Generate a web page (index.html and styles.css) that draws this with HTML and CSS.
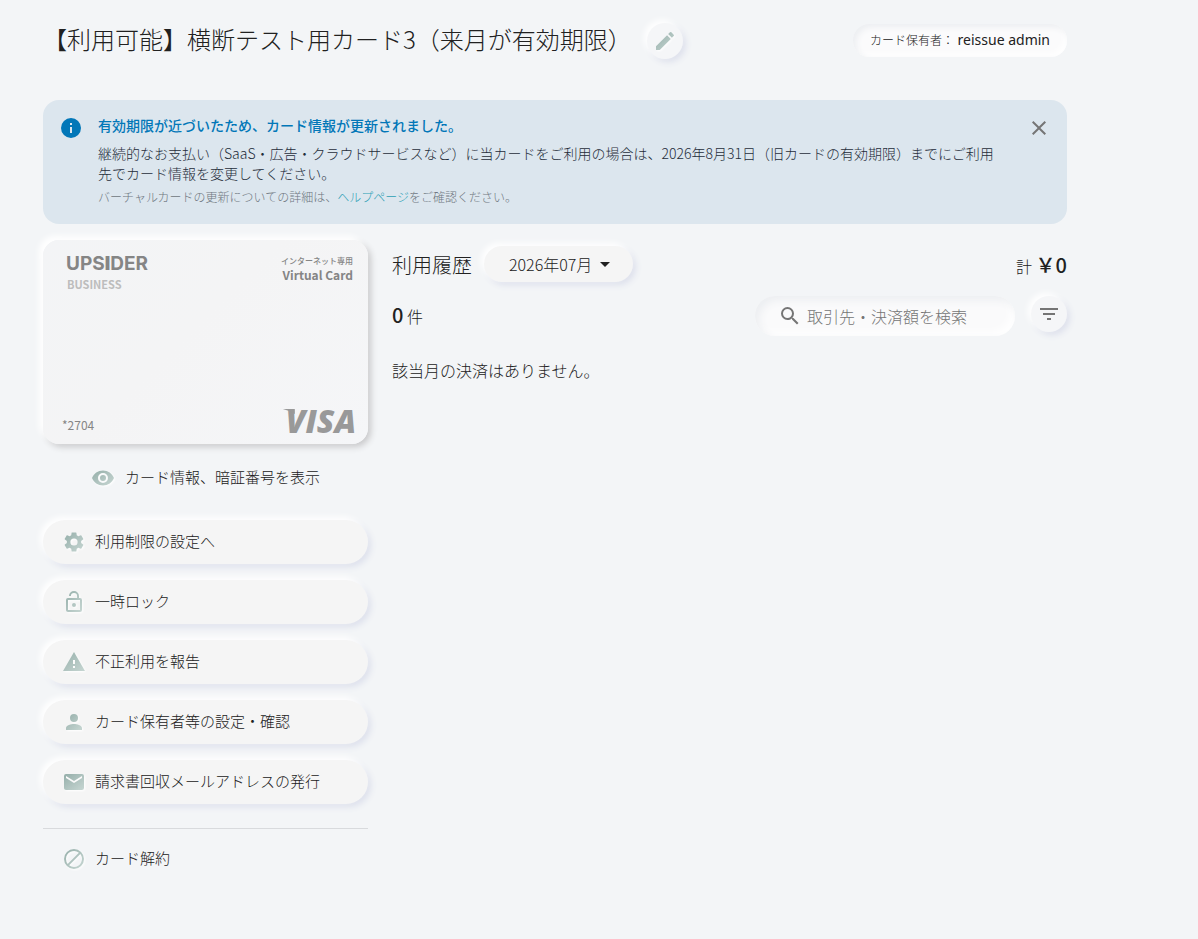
FILE: index.html
```html
<!DOCTYPE html>
<html lang="ja">
<head>
  <meta charset="UTF-8">
  <title>カード詳細</title>
  <meta name="viewport" content="width=device-width, initial-scale=1">
  <link rel="stylesheet" href="styles.css">
</head>
<body>
  <!-- shared gradients for the menu icons -->
  <svg class="defs" width="0" height="0" aria-hidden="true">
    <defs>
      <linearGradient id="sage" x1="0" y1="0" x2="1" y2="1">
        <stop offset="0" stop-color="#94aea9"/>
        <stop offset="0.6" stop-color="#b4c7c3"/>
        <stop offset="1" stop-color="#c6d6d2"/>
      </linearGradient>
    </defs>
  </svg>

  <main class="container">
    <header class="header">
      <h1>【利用可能】横断テスト用カード3（来月が有効期限）</h1>
      <button class="round-btn" aria-label="カード名を編集">
        <svg class="icon sage" viewBox="0 0 24 24"><path d="M3 17.250V21h3.750L17.810 9.940l-3.750-3.750L3 17.250zM20.710 7.040a1 1 0 0 0 0-1.410l-2.340-2.340a1 1 0 0 0-1.410 0l-1.830 1.830 3.750 3.750 1.830-1.830z"/></svg>
      </button>
      <div class="owner"><span>カード保有者：</span> reissue admin</div>
    </header>

    <section class="notice">
      <svg class="icon info" viewBox="0 0 24 24"><path d="M12 2a10 10 0 1 0 0 20 10 10 0 0 0 0-20zm1 15h-2v-6h2v6zm0-8h-2V7h2v2z"/></svg>
      <div class="notice-text">
        <h2>有効期限が近づいたため、カード情報が更新されました。</h2>
        <p>継続的なお支払い（SaaS・広告・クラウドサービスなど）に当カードをご利用の場合は、2026年8月31日（旧カードの有効期限）までにご利用先でカード情報を変更してください。</p>
        <p class="sub">バーチャルカードの更新についての詳細は、<a href="#">ヘルプページ</a>をご確認ください。</p>
      </div>
      <button class="close" aria-label="閉じる">
        <svg class="icon" viewBox="0 0 24 24"><path d="M19 6.410L17.590 5 12 10.590 6.410 5 5 6.410 10.590 12 5 17.590 6.410 19 12 13.410 17.590 19 19 17.590 13.410 12z"/></svg>
      </button>
    </section>

    <div class="columns">
      <aside class="side">
        <div class="card">
          <div class="card-row">
            <div>
              <div class="brand">UPS<span>I</span>DER</div>
              <div class="plan">BUSINESS</div>
            </div>
            <div class="card-type">
              <small>インターネット専用</small>
              <b>Virtual Card</b>
            </div>
          </div>
          <div class="card-row bottom">
            <span class="number">*2704</span>
            <span class="visa">VISA</span>
          </div>
        </div>

        <button class="show">
          <svg class="icon sage" viewBox="0 0 24 24"><path d="M12 4.500C7 4.500 2.730 7.610 1 12c1.730 4.390 6 7.500 11 7.500s9.270-3.110 11-7.500c-1.730-4.390-6-7.500-11-7.500zM12 17a5 5 0 1 1 0-10 5 5 0 0 1 0 10zm0-8a3 3 0 1 0 0 6 3 3 0 0 0 0-6z"/></svg>
          <span>カード情報、暗証番号を表示</span>
        </button>

        <nav class="menu">
          <button>
            <svg class="icon sage" viewBox="0 0 24 24"><path d="M19.140 12.940c.04-.3.06-.61.06-.94 0-.32-.02-.64-.07-.94l2.030-1.580a.49.49 0 0 0 .12-.61l-1.920-3.320a.488.488 0 0 0-.59-.22l-2.390.96c-.5-.38-1.030-.7-1.620-.94l-.36-2.540a.484.484 0 0 0-.48-.41h-3.840c-.24 0-.43.17-.47.41l-.36 2.540c-.59.24-1.130.57-1.620.94l-2.390-.96c-.22-.08-.47 0-.59.22L2.740 8.870c-.12.21-.08.47.12.61l2.030 1.580c-.05.3-.09.63-.09.94s.02.64.07.94l-2.030 1.580a.49.49 0 0 0-.12.61l1.920 3.320c.12.22.37.29.59.22l2.390-.96c.5.38 1.030.7 1.620.94l.36 2.540c.05.24.24.41.48.41h3.840c.24 0 .44-.17.47-.41l.36-2.540c.59-.24 1.130-.56 1.620-.94l2.390.96c.22.08.47 0 .59-.22l1.920-3.320c.12-.22.07-.47-.12-.61l-2.010-1.580zM12 15.600A3.600 3.600 0 1 1 12 8.400a3.600 3.600 0 0 1 0 7.200z"/></svg>
            <span>利用制限の設定へ</span>
          </button>
          <button>
            <svg class="icon sage" viewBox="0 0 24 24"><path d="M12 17a2 2 0 1 0 0-4 2 2 0 0 0 0 4zm6-9h-1V6A5 5 0 0 0 7 6h1.900a3.100 3.100 0 0 1 6.200 0v2H6a2 2 0 0 0-2 2v10c0 1.100.9 2 2 2h12a2 2 0 0 0 2-2V10a2 2 0 0 0-2-2zm0 12H6V10h12v10z"/></svg>
            <span>一時ロック</span>
          </button>
          <button>
            <svg class="icon sage" viewBox="0 0 24 24"><path d="M1 21h22L12 2 1 21zm12-3h-2v-2h2v2zm0-4h-2v-4h2v4z"/></svg>
            <span>不正利用を報告</span>
          </button>
          <button>
            <svg class="icon sage" viewBox="0 0 24 24"><path d="M12 12a4 4 0 1 0 0-8 4 4 0 0 0 0 8zm0 2c-2.670 0-8 1.340-8 4v2h16v-2c0-2.660-5.330-4-8-4z"/></svg>
            <span>カード保有者等の設定・確認</span>
          </button>
          <button>
            <svg class="icon sage" viewBox="0 0 24 24"><path d="M20 4H4a2 2 0 0 0-2 2v12c0 1.100.9 2 2 2h16a2 2 0 0 0 2-2V6a2 2 0 0 0-2-2zm0 4l-8 5-8-5V6l8 5 8-5v2z"/></svg>
            <span>請求書回収メールアドレスの発行</span>
          </button>
        </nav>

        <button class="cancel">
          <svg class="icon sage" viewBox="0 0 24 24"><path d="M12 2a10 10 0 1 0 0 20 10 10 0 0 0 0-20zM4 12a8 8 0 0 1 12.900-6.310L5.690 16.900A7.900 7.900 0 0 1 4 12zm8 8a7.900 7.900 0 0 1-4.900-1.690L18.310 7.100A8 8 0 0 1 12 20z"/></svg>
          <span>カード解約</span>
        </button>
      </aside>

      <section class="history">
        <div class="row">
          <h2>利用履歴</h2>
          <button class="month">2026年07月
            <svg viewBox="0 0 10 5"><path d="M0 0h10L5 5z"/></svg>
          </button>
          <div class="total">計 <b>￥0</b></div>
        </div>
        <div class="row filters">
          <div class="count"><b>0</b> 件</div>
          <label class="search">
            <svg class="icon" viewBox="0 0 24 24"><path d="M15.500 14h-.79l-.28-.27A6.471 6.471 0 0 0 16 9.500 6.500 6.500 0 1 0 9.500 16c1.610 0 3.090-.59 4.230-1.570l.27.28v.79l5 4.990L20.490 19l-4.990-5zm-6 0a4.500 4.500 0 1 1 0-9 4.500 4.500 0 0 1 0 9z"/></svg>
            <input type="text" placeholder="取引先・決済額を検索" aria-label="取引先・決済額を検索">
          </label>
          <button class="round-btn" aria-label="絞り込み">
            <svg class="icon" viewBox="0 0 24 24"><path d="M10 18h4v-2h-4v2zM3 6v2h18V6H3zm3 7h12v-2H6v2z"/></svg>
          </button>
        </div>
        <p class="empty">該当月の決済はありません。</p>
      </section>
    </div>
  </main>
</body>
</html>
```
FILE: styles.css
```css
* {
  box-sizing: border-box;
}

body {
  margin: 0;
  background: #f3f5f7;
  color: #212121;
  font-family: "Noto Sans CJK JP", sans-serif;
  font-size: 14px;
  font-weight: 300;
}

h1, h2, p {
  margin: 0;
  font-weight: 300;
}

button {
  display: flex;
  align-items: center;
  padding: 0;
  border: 0;
  background: none;
  color: inherit;
  font: inherit;
  cursor: pointer;
}

.defs {
  position: absolute;
}

.icon {
  flex: none;
  width: 24px;
  height: 24px;
  fill: #757575;
}

.sage {
  fill: url(#sage);
  filter: drop-shadow(1px 1px 1px #fff);
}

.container {
  padding: 20px 131px 40px 43px;
}

.header {
  display: flex;
  align-items: center;
  height: 40px;
}

h1 {
  padding-bottom: 2px;
  font-size: 24px;
  line-height: 36px;
}

.round-btn {
  justify-content: center;
  flex: none;
  width: 36px;
  height: 36px;
  border-radius: 50%;
  background: #f5f6f8;
  box-shadow: -3px -3px 6px #fff, 3px 3px 6px #dde0ec;
}

.header .round-btn {
  margin: 2px 0 0 15px;
}

.owner {
  margin-left: auto;
  padding: 0 17px;
  border-radius: 16px;
  background: #fbfbfc;
  box-shadow: inset 3px 3px 6px #eceef1, inset -3px -3px 6px #fff;
  font-family: "Noto Sans", "Noto Sans CJK JP", sans-serif;
  font-weight: 400;
  line-height: 32px;
}

.owner span {
  font-size: 12px;
  font-weight: 300;
}

.notice {
  display: flex;
  align-items: flex-start;
  margin-top: 40px;
  padding: 16px;
  border-radius: 16px;
  background: #dce6ee;
  color: #1f2d3a;
}

.info {
  fill: #0277b8;
}

.notice-text {
  flex: 1;
  margin: -1px 20px 1px 15px;
  line-height: 20px;
}

.notice h2 {
  margin-bottom: 8px;
  color: #0277b8;
  font-size: 14px;
  font-weight: 500;
}

.notice .sub {
  margin-top: 4px;
  color: #6f7780;
  font-size: 12px;
}

.notice a {
  color: #2c9fb5;
  text-decoration: none;
}

.columns {
  display: flex;
  gap: 24px;
  margin-top: 16px;
}

.side {
  flex: none;
  width: 325px;
}

.card {
  display: flex;
  flex-direction: column;
  justify-content: space-between;
  height: 204px;
  padding: 14px 12px 7px 19px;
  border-radius: 16px;
  background: linear-gradient(135deg, #f3f4f6, #f4f4f5 45%, #f5f6f8);
  box-shadow: -4px -4px 6px #fff, 3px 3px 6px #c9c9cb;
  color: #858585;
}

.card-row {
  display: flex;
  justify-content: space-between;
}

.card-row.bottom {
  align-items: flex-end;
}

.brand {
  margin-left: 4px;
  font-family: Inter, sans-serif;
  font-size: 19px;
  font-weight: 700;
  line-height: 20px;
}

.brand span {
  font-weight: 900;
}

.plan {
  margin-left: 5px;
  color: #bdbdbd;
  font-size: 11px;
  font-weight: 700;
  line-height: 20px;
}

.card-type {
  display: flex;
  flex-direction: column;
  padding-right: 3px;
  text-align: right;
}

.card-type small {
  font-size: 8px;
  font-weight: 500;
  line-height: 14px;
}

.card-type b {
  font-size: 12px;
  font-weight: 700;
  line-height: 14px;
}

.number {
  font-size: 12px;
  font-weight: 400;
  line-height: 24px;
}

.visa {
  position: relative;
  color: #999;
  font-family: "Open Sans", sans-serif;
  font-size: 32px;
  font-style: italic;
  font-weight: 800;
  line-height: 32px;
}

.visa::before {
  content: "";
  position: absolute;
  top: 4px;
  left: -3px;
  width: 12px;
  height: 5px;
  background: #999;
  clip-path: polygon(0 0, 100% 0, 100% 100%, 60% 45%);
}

.show {
  gap: 10px;
  height: 36px;
  margin: 16px auto 24px;
  font-size: 15px;
}

.show span, .menu span, .cancel span {
  padding-bottom: 3px;
}

.menu {
  display: flex;
  flex-direction: column;
  gap: 16px;
  padding-bottom: 24px;
  border-bottom: 1px solid #d8dadd;
}

.menu button {
  gap: 9px;
  height: 44px;
  padding: 0 19px;
  border-radius: 22px;
  background: #f5f5f5;
  box-shadow: -3px -3px 6px #fff, 3px 3px 6px #dde0ec;
  font-size: 15px;
}

.cancel {
  gap: 9px;
  height: 44px;
  margin-top: 8px;
  padding: 0 19px;
  font-size: 15px;
}

.history {
  flex: 1;
  min-width: 0;
  padding-top: 6px;
}

.row {
  display: flex;
  align-items: center;
  height: 36px;
}

.history h2 {
  font-size: 20px;
}

.month {
  gap: 8px;
  height: 36px;
  margin-left: 12px;
  padding: 0 23px 0 25px;
  border-radius: 18px;
  background: #f5f5f5;
  box-shadow: -3px -3px 6px #fff, 3px 3px 6px #dde0ec;
  font-size: 16px;
}

.month svg {
  width: 10px;
  height: 5px;
  fill: #212121;
}

.total {
  margin-left: auto;
  font-size: 16px;
}

.row b {
  font-size: 20px;
  font-weight: 500;
}

.filters {
  align-items: flex-start;
  height: 40px;
  margin-top: 14px;
}

.count {
  margin-right: auto;
  font-size: 16px;
  line-height: 38px;
}

.search {
  display: flex;
  align-items: center;
  gap: 5px;
  width: 260px;
  height: 40px;
  margin-right: 16px;
  padding: 0 16px 0 23px;
  border-radius: 20px;
  background: #fafafb;
  box-shadow: inset 4px 4px 8px #eceef1, inset -4px -4px 8px #fff;
}

.search input {
  flex: 1;
  min-width: 0;
  padding: 0;
  border: 0;
  outline: 0;
  background: none;
  color: inherit;
  font: inherit;
  font-size: 16px;
}

.search input::placeholder {
  color: #757575;
}

.empty {
  margin-top: 22px;
  font-size: 16px;
  line-height: 24px;
}
```
